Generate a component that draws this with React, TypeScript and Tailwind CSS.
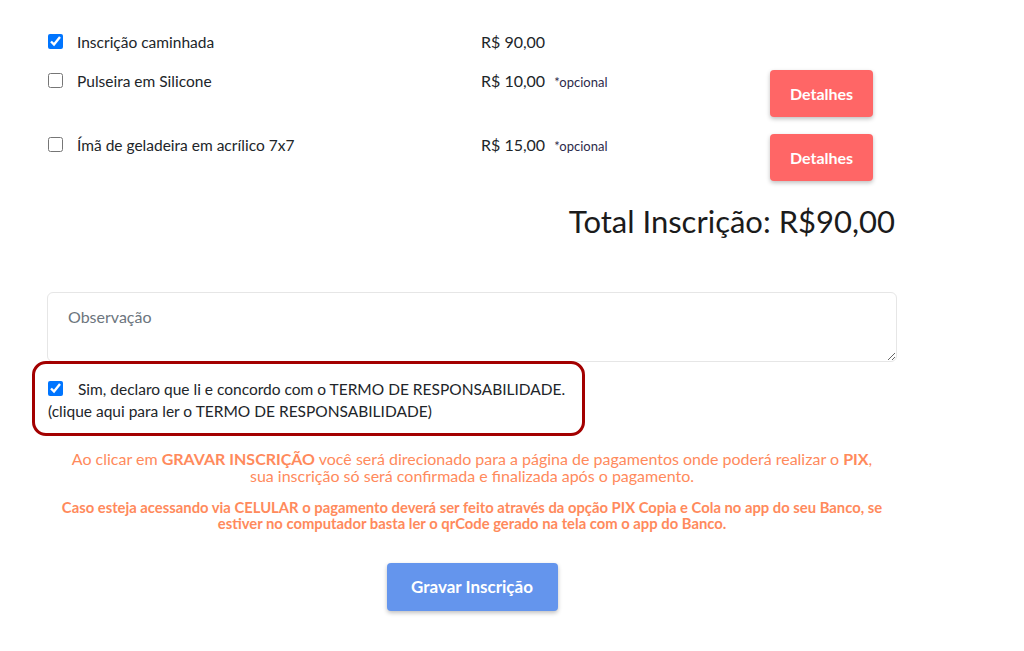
import React, { useState } from 'react';

const itens = [
  { id: 'caminhada', label: 'Inscrição caminhada', preco: 'R$ 90,00', opcional: false, checked: true },
  { id: 'pulseira', label: 'Pulseira em Silicone', preco: 'R$ 10,00', opcional: true, checked: false },
  { id: 'ima', label: 'Ímã de geladeira em acrílico 7x7', preco: 'R$ 15,00', opcional: true, checked: false },
];

export default function App() {
  const [marcados, setMarcados] = useState<Record<string, boolean>>({ caminhada: true });
  const [aceite, setAceite] = useState(true);

  return (
    <div className="min-h-[651px] bg-white text-[#212529]" style={{ fontFamily: 'Lato, "Noto Sans", sans-serif' }}>
      <div className="w-[850px] ml-[47px] pt-[31px]">
        {/* Itens */}
        {itens.map((item, i) => (
          <div key={item.id} className={`flex items-start ${i === 0 ? 'h-[39px]' : 'h-[64px]'}`}>
            <div className="w-[434px] flex items-start pl-[1px]">
              <input
                type="checkbox"
                checked={!!marcados[item.id]}
                onChange={() => setMarcados(m => ({ ...m, [item.id]: !m[item.id] }))}
                className="w-[15px] h-[15px] mt-[3px] accent-[#0075ff]"
              />
              <span className="ml-[14px] text-[15.5px] leading-[22px]">{item.label}</span>
            </div>
            <div className="w-[289px] flex items-baseline">
              <span className="text-[16px] leading-[22px]">{item.preco}</span>
              {item.opcional && <span className="ml-[9px] text-[13px] text-[#2d2a4a]">*opcional</span>}
            </div>
            {item.opcional && (
              <button className="w-[103px] h-[47px] bg-[#ff6666] text-white font-bold text-[16px] rounded-[4px] shadow-[0_2px_4px_rgba(0,0,0,0.25)]">
                Detalhes
              </button>
            )}
          </div>
        ))}

        {/* Total */}
        <div className="text-right text-[31px] leading-[36px] mt-[5px] pr-[2px] text-[#1b1b1b]">
          Total Inscrição: R$90,00
        </div>

        {/* Observação */}
        <textarea
          placeholder="Observação"
          className="mt-[53px] block w-[850px] h-[70px] border border-[#e6e6e6] rounded-[6px] px-[20px] py-[12px] text-[16px] placeholder:text-[#6c757d] outline-none"
        />

        {/* Termo */}
        <div className="-ml-[15px] -mt-[1px] w-[553px] border-[3px] border-[#a30000] rounded-[14px] pl-[13px] pt-[14px] pb-[11px] text-[15.5px] leading-[22px]">
          <div className="flex items-start">
            <input
              type="checkbox"
              checked={aceite}
              onChange={() => setAceite(!aceite)}
              className="w-[15px] h-[15px] mt-[3px] accent-[#0075ff]"
            />
            <span className="ml-[15px]">Sim, declaro que li e concordo com o TERMO DE RESPONSABILIDADE.</span>
          </div>
          <div>(clique aqui para ler o TERMO DE RESPONSABILIDADE)</div>
        </div>

        {/* Avisos */}
        <p className="mt-[14px] text-center text-[#ff8a5c] text-[16px] leading-[17px] whitespace-nowrap">
          Ao clicar em <b>GRAVAR INSCRIÇÃO</b> você será direcionado para a página de pagamentos onde poderá realizar o <b>PIX</b>,
          <br />
          sua inscrição só será confirmada e finalizada após o pagamento.
        </p>
        <p className="mt-[15px] text-center text-[#ff8a5c] text-[14.8px] leading-[16px] font-bold whitespace-nowrap">
          Caso esteja acessando via CELULAR o pagamento deverá ser feito através da opção PIX Copia e Cola no app do seu Banco, se
          <br />
          estiver no computador basta ler o qrCode gerado na tela com o app do Banco.
        </p>

        <div className="flex justify-center mt-[32px]">
          <button className="w-[171px] h-[48px] bg-[#6495ed] text-white font-bold text-[17px] rounded-[4px] shadow-[0_2px_4px_rgba(0,0,0,0.25)]">
            Gravar Inscrição
          </button>
        </div>
      </div>
    </div>
  );
}
